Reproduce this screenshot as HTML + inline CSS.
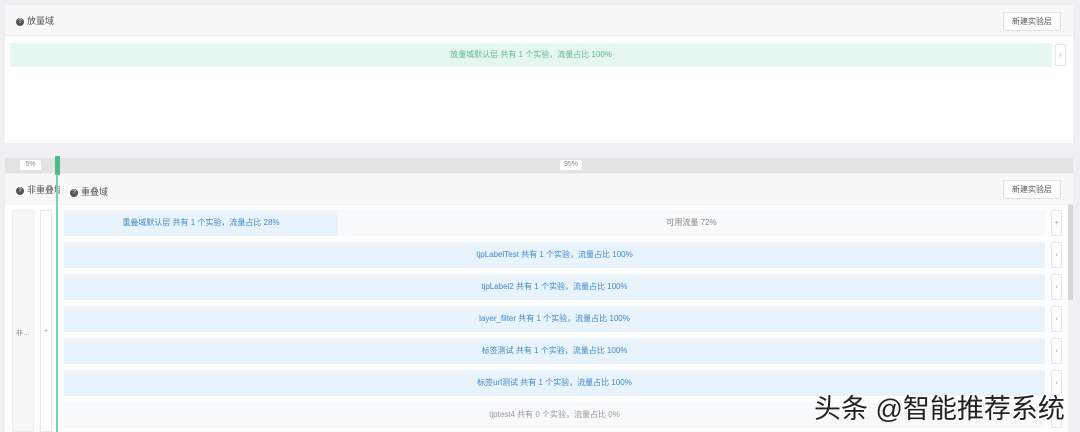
<!DOCTYPE html>
<html><head><meta charset="utf-8"><style>
*{margin:0;padding:0;box-sizing:border-box}
body{width:1080px;height:432px;overflow:hidden;background:#f0f0f4;font-family:"Liberation Sans","Noto Sans CJK SC",sans-serif;position:relative;font-size:8px;color:#666}
.a{position:absolute}
.btn{position:absolute;background:#fff;border:1px solid #e2e2e2;border-radius:2px;font-size:8px;color:#555;text-align:center;line-height:17px}
.q{display:inline-block;width:8px;height:8px;border-radius:50%;background:#555;color:#fff;font-size:6px;line-height:8px;text-align:center;vertical-align:middle;margin-right:3px}
.row{position:absolute;left:64px;width:981px;height:26px;background:#e8f3fc;color:#3f88c5;text-align:center;line-height:26px;font-size:8px;border-radius:2px}
.sb{position:absolute;left:1051px;width:11px;height:26px;background:#fff;border:1px solid #e4e4e4;border-radius:2px;color:#aaa;font-size:8px;text-align:center;line-height:24px}
</style></head><body>
<div class="a" style="left:5px;top:5px;width:1068px;height:138px;background:#fff"></div>
<div class="a" style="left:5px;top:5px;width:1068px;height:31px;background:#f8f8f8;border-bottom:1px solid #eee"></div>
<div class="a" style="left:16px;top:14px;font-size:9px;color:#555"><span class="q">?</span>放量域</div>
<div class="btn" style="left:1003px;top:12px;width:58px;height:19px">新建实验层</div>
<div class="a" style="left:10px;top:43px;width:1042px;height:24px;background:#e6f7f1;color:#5cb88a;text-align:center;line-height:24px">放量域默认层 共有 1 个实验，流量占比 100%</div>
<div class="sb" style="left:1055px;top:44px;height:22px;line-height:20px">›</div>

<div class="a" style="left:5px;top:158px;width:1068px;height:15px;background:#e3e3e3"></div>
<div class="a" style="left:20px;top:160px;width:21px;height:10px;background:#fff;border-radius:2px;font-size:7px;color:#888;text-align:center;line-height:10px">5%</div>
<div class="a" style="left:560px;top:160px;width:22px;height:10px;background:#fff;border-radius:2px;font-size:7px;color:#888;text-align:center;line-height:10px">95%</div>

<div class="a" style="left:5px;top:174px;width:60px;height:258px;background:#fff"></div>
<div class="a" style="left:5px;top:174px;width:60px;height:31px;background:#f8f8f8"></div>
<div class="a" style="left:16px;top:183px;font-size:9px;color:#555;white-space:nowrap;width:44px;overflow:hidden"><span class="q">?</span>非重叠域</div>
<div class="a" style="left:12px;top:210px;width:22px;height:222px;background:#f8f8f9;border:1px solid #eee;font-size:7px;color:#888;text-align:center;padding-top:117px">非…</div>
<div class="a" style="left:40px;top:210px;width:12px;height:222px;background:#fff;border:1px solid #e8e8e8;font-size:7px;color:#999;text-align:center;padding-top:117px">+</div>

<div class="a" style="left:60px;top:174px;width:1013px;height:258px;background:#fff"></div>
<div class="a" style="left:60px;top:174px;width:1013px;height:31px;background:#f8f8f8;border-bottom:1px solid #eee"></div>
<div class="a" style="left:70px;top:185px;font-size:9px;color:#555"><span class="q">?</span>重叠域</div>
<div class="btn" style="left:1003px;top:180px;width:58px;height:19px">新建实验层</div>
<div class="a" style="left:1068px;top:205px;width:5px;height:95px;background:#d6d6d6"></div>
<div class="a" style="left:1068px;top:300px;width:5px;height:132px;background:#f2f2f2"></div>

<div class="row" style="top:210px;background:#f8f9fb;color:#888"><span style="position:absolute;left:0;top:0;width:274px;height:26px;background:#e8f3fc;color:#3f88c5">重叠域默认层 共有 1 个实验，流量占比 28%</span><span style="position:absolute;left:274px;width:707px">可用流量 72%</span></div>
<div class="sb" style="top:210px">+</div>
<div class="row" style="top:242px">tjpLabelTest 共有 1 个实验，流量占比 100%</div><div class="sb" style="top:242px">›</div>
<div class="row" style="top:274px">tjpLabel2 共有 1 个实验，流量占比 100%</div><div class="sb" style="top:274px">›</div>
<div class="row" style="top:306px">layer_filter 共有 1 个实验，流量占比 100%</div><div class="sb" style="top:306px">›</div>
<div class="row" style="top:338px">标签测试 共有 1 个实验，流量占比 100%</div><div class="sb" style="top:338px">›</div>
<div class="row" style="top:370px">标签url测试 共有 1 个实验，流量占比 100%</div><div class="sb" style="top:370px">›</div>
<div class="row" style="top:402px;background:#f8f9fb;color:#999">tjptest4 共有 0 个实验，流量占比 0%</div><div class="sb" style="top:402px">›</div>

<div class="a" style="left:56px;top:158px;width:2px;height:274px;background:#7fd0b0"></div>
<div class="a" style="left:55px;top:156px;width:5px;height:19px;background:#4fb98c;border-radius:1px"></div>

<div class="a" style="left:814px;top:387px;font-size:27px;color:#222;white-space:nowrap;text-shadow:1px 1px 0 #fff,-1px -1px 0 #fff">头条 @智能推荐系统</div>
</body></html>
